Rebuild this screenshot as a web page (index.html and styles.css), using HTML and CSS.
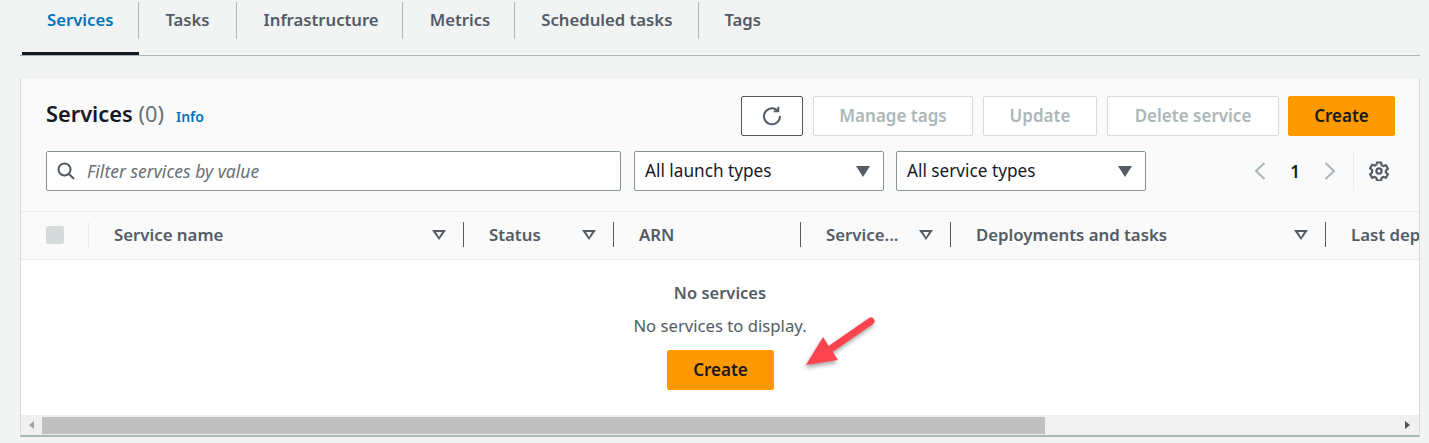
FILE: index.html
```html
<!DOCTYPE html>
<html lang="en">

<head>
  <meta charset="UTF-8">
  <title>Services</title>
  <link rel="stylesheet" href="styles.css">
</head>

<body>
  <div class="tabs">
    <a class="tab active">Services</a>
    <a class="tab">Tasks</a>
    <a class="tab">Infrastructure</a>
    <a class="tab">Metrics</a>
    <a class="tab">Scheduled tasks</a>
    <a class="tab">Tags</a>
  </div>

  <div class="card">
    <div class="card-head">
      <div class="title-row">
        <h2>Services <span class="count">(0)</span></h2>
        <a class="info">Info</a>
        <div class="actions">
          <button class="btn btn-refresh">
            <svg width="20" height="20" viewBox="0 0 20 20" fill="none" stroke="#545b64" stroke-width="2">
              <path d="M15.2 4.2A8 8 0 1 0 18 10"/>
              <path d="M16.3 0.8V5.3H11.8"/>
            </svg>
          </button>
          <button class="btn btn-manage" disabled>Manage tags</button>
          <button class="btn btn-update" disabled>Update</button>
          <button class="btn btn-delete" disabled>Delete service</button>
          <button class="btn btn-primary btn-create-top">Create</button>
        </div>
      </div>

      <div class="filter-row">
        <div class="search">
          <svg width="18" height="18" viewBox="0 0 18 18" fill="none" stroke="#545b64" stroke-width="2">
            <circle cx="7.5" cy="7.5" r="6"/>
            <path d="M12 12l5 5"/>
          </svg>
          <span>Filter services by value</span>
        </div>
        <div class="select select-launch">All launch types<i class="caret"></i></div>
        <div class="select select-service">All service types<i class="caret"></i></div>
        <div class="pager">
          <svg width="14" height="20" viewBox="0 0 14 20" fill="none" stroke="#aab7b8" stroke-width="2">
            <path d="M11.5 2L3 10l8.500 8"/>
          </svg>
          <span class="page-num">1</span>
          <svg width="14" height="20" viewBox="0 0 14 20" fill="none" stroke="#aab7b8" stroke-width="2">
            <path d="M2.500 2L11 10l-8.500 8"/>
          </svg>
        </div>
        <div class="settings">
          <svg width="20" height="20" viewBox="0 0 20 20" fill="none" stroke="#545b64" stroke-width="2.200">
            <path d="M8 1.500h4l.6 2.600 1.700 1 2.600-.8 2 3.400-2 1.800v2l2 1.800-2 3.400-2.600-.8-1.700 1-.6 2.600H8l-.6-2.600-1.700-1-2.600.8-2-3.400 2-1.800V9L1.100 7.200l2-3.400 2.600.8 1.700-1z"/>
            <circle cx="10" cy="10" r="2.600"/>
          </svg>
        </div>
      </div>

      <div class="columns">
        <div class="col col-check"><i class="checkbox"></i></div>
        <div class="col col-name">Service name<i class="sort"></i></div>
        <div class="col col-status">Status<i class="sort"></i></div>
        <div class="col col-arn">ARN</div>
        <div class="col col-type">Service...<i class="sort"></i></div>
        <div class="col col-deploy">Deployments and tasks<i class="sort"></i></div>
        <div class="col col-last">Last deployment</div>
      </div>
    </div>

    <div class="empty">
      <strong>No services</strong>
      <p>No services to display.</p>
      <button class="btn btn-primary btn-create-empty">Create</button>
    </div>

    <div class="scrollbar">
      <i class="arrow arrow-left"></i>
      <div class="track"><div class="thumb"></div></div>
      <i class="arrow arrow-right"></i>
    </div>
  </div>

  <svg class="callout" width="90" height="70" viewBox="0 0 90 70">
    <path d="M71 11L32 38" stroke="#fb4450" stroke-width="7" stroke-linecap="round" fill="none"/>
    <path d="M6 55L23 27 38 50z" fill="#fb4450"/>
  </svg>
</body>

</html>
```

FILE: styles.css
```css
* {
  box-sizing: border-box;
}

body {
  margin: 0;
  height: 443px;
  overflow: hidden;
  padding: 0 9px 0 20px;
  background: #f2f3f3;
  color: #16191f;
  font-family: "Noto Sans", "Open Sans", sans-serif;
  font-size: 16px;
  position: relative;
}

.tabs {
  display: flex;
  height: 56px;
  padding: 0 0 0 2px;
  border-bottom: 1px solid #aab7b8;
}

.tab {
  position: relative;
  height: 55px;
  padding: 8px 25px 0 27px;
  color: #545b64;
  font-size: 16.7px;
  font-weight: 600;
  line-height: 24px;
  white-space: nowrap;
}

.tab::after {
  content: "";
  position: absolute;
  top: 2px;
  right: 0;
  width: 1px;
  height: 37px;
  background: #aab7b8;
}

.tab:last-child::after {
  display: none;
}

.tab.active {
  padding-left: 25px;
  padding-right: 26px;
  color: #0073bb;
  border-bottom: 3px solid #16191f;
}

.tab:nth-child(2) {
  padding-left: 26px;
  padding-right: 27px;
}

.tab:nth-child(3) {
  padding-right: 24px;
}

.tab:nth-child(5) {
  padding-left: 26px;
  padding-right: 27px;
}

.tab:nth-child(6) {
  padding-left: 25px;
}

.card {
  margin-top: 21px;
  height: 360px;
  background: #fff;
  border-left: 1px solid #d5dbdb;
  border-top: 1px solid #eaeded;
  border-right: 1px solid #d5dbdb;
  border-bottom: 2px solid #aab7b8;
  display: flex;
  flex-direction: column;
}

.card-head {
  background: #fafafa;
  border-bottom: 1px solid #eaeded;
}

.title-row {
  display: flex;
  align-items: center;
  height: 72px;
  padding: 0 24px 0 25px;
}

.title-row h2 {
  margin: 0 0 2px;
  font-size: 21.8px;
  font-weight: 600;
}

.count {
  color: #687078;
  font-weight: 400;
}

.info {
  margin-left: 12px;
  margin-top: 4px;
  color: #0073bb;
  font-size: 14px;
  font-weight: 600;
}

.actions {
  display: flex;
  gap: 10px;
  margin-left: auto;
  margin-top: 4px;
}

.btn {
  height: 40px;
  border-radius: 2px;
  font: 600 17px "Noto Sans", "Open Sans", sans-serif;
  background: #fff;
  border: 1px solid #d5dbdb;
  padding: 0 0 2px;
}

.btn[disabled] {
  color: #aab7b8;
}

.btn-refresh {
  width: 62px;
  padding: 0;
  border-color: #545b64;
  display: flex;
  align-items: center;
  justify-content: center;
}

.btn-manage {
  width: 160px;
}

.btn-update {
  width: 114px;
}

.btn-delete {
  width: 172px;
}

.btn-primary {
  background: #ff9900;
  border-color: #ff9900;
  color: #16191f;
}

.btn-create-top {
  width: 107px;
  margin-left: -1px;
}

.filter-row {
  display: flex;
  align-items: center;
  height: 40px;
  padding: 2px 0 0 25px;
}

.search {
  display: flex;
  align-items: center;
  gap: 12px;
  width: 575px;
  height: 40px;
  padding-left: 10px;
  background: #fff;
  border: 1px solid #879596;
  border-radius: 2px;
  color: #687078;
  font-size: 17.5px;
  font-style: italic;
}

.select {
  display: flex;
  align-items: center;
  justify-content: space-between;
  height: 40px;
  padding: 0 13px 2px 10px;
  width: 250px;
  background: #fff;
  border: 1px solid #879596;
  border-radius: 2px;
  font-size: 17.2px;
}

.select-launch {
  margin-left: 13px;
}

.select-service {
  margin-left: 12px;
}

.caret {
  width: 0;
  height: 0;
  margin-top: 2px;
  border-left: 7px solid transparent;
  border-right: 7px solid transparent;
  border-top: 11px solid #545b64;
}

.pager {
  display: flex;
  align-items: center;
  margin-left: 107px;
  width: 86px;
  justify-content: space-between;
  padding-right: 2px;
}

.page-num {
  font-size: 17px;
  font-weight: 600;
}

.settings {
  display: flex;
  align-items: center;
  height: 40px;
  margin-left: 14px;
  padding-left: 15px;
  border-left: 1px solid #eaeded;
}

.columns {
  display: flex;
  align-items: center;
  height: 48px;
  margin-top: 21px;
  padding-bottom: 2px;
  border-top: 1px solid #eaeded;
  color: #545b64;
  font-size: 16.8px;
  font-weight: 600;
  overflow: hidden;
}

.col {
  display: flex;
  align-items: center;
  justify-content: space-between;
  flex: none;
  height: 25px;
  border-left: 1px solid #545b64;
  padding: 0 17px 0 25px;
  white-space: nowrap;
}

.col-check {
  width: 67px;
  border-left: 0;
  padding-right: 0;
}

.col-name {
  width: 375px;
  border-left-color: #eaeded;
}

.col-status {
  width: 150px;
}

.col-arn {
  width: 187px;
}

.col-type {
  width: 150px;
}

.col-deploy {
  width: 375px;
}

.col-last {
  width: 200px;
}

.checkbox {
  width: 18px;
  height: 18px;
  border-radius: 2px;
  background: #d5dbdb;
}

.sort {
  width: 0;
  height: 0;
  border-left: 7px solid transparent;
  border-right: 7px solid transparent;
  border-top: 10px solid #545b64;
  position: relative;
}

.sort::after {
  content: "";
  position: absolute;
  left: -3px;
  top: -8px;
  border-left: 3px solid transparent;
  border-right: 3px solid transparent;
  border-top: 5px solid #fafafa;
}

.empty {
  flex: 1;
  display: flex;
  flex-direction: column;
  align-items: center;
  padding-top: 21px;
  color: #545b64;
}

.empty strong {
  font-size: 16.5px;
  font-weight: 600;
  line-height: 24px;
}

.empty p {
  margin: 9px 0 12px;
  font-size: 16.7px;
  line-height: 24px;
}

.btn-create-empty {
  width: 107px;
  margin-left: 1px;
}

.scrollbar {
  display: flex;
  align-items: center;
  height: 20px;
  background: #f0f0f0;
}

.track {
  flex: 1;
  align-self: flex-start;
  height: 17px;
  margin-top: 2px;
}

.thumb {
  width: 1003px;
  height: 100%;
  background: #c0c0c0;
}

.arrow {
  flex: none;
  width: 0;
  height: 0;
  border-top: 4px solid transparent;
  border-bottom: 4px solid transparent;
}

.arrow-left {
  margin: 0 8px;
  border-right: 5px solid #a0a0a0;
}

.arrow-right {
  margin: 0 9px 0 8px;
  border-left: 5px solid #505050;
}

.callout {
  position: absolute;
  left: 800px;
  top: 310px;
  filter: drop-shadow(-1px 3px 2px rgba(0, 0, 0, 0.35));
}
```
